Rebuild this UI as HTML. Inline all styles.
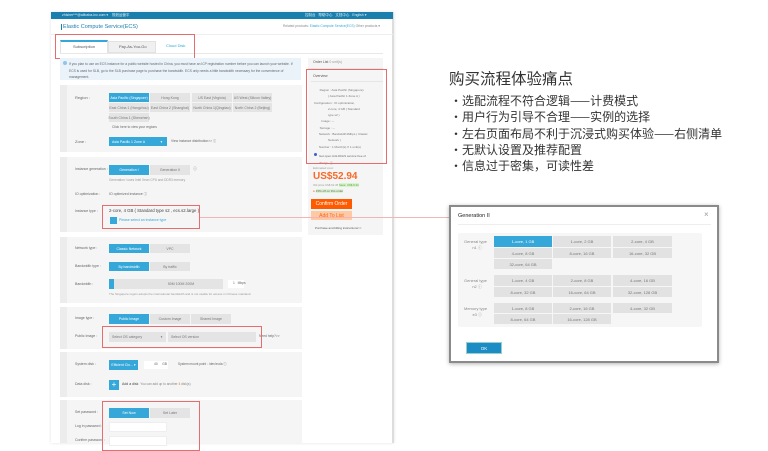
<!DOCTYPE html>
<html><head><meta charset="utf-8"><style>
*{margin:0;padding:0;box-sizing:border-box}
body{width:768px;height:443px;background:#fff;position:relative;overflow:hidden;font-family:"Liberation Sans","Noto Sans CJK SC",sans-serif}
.a{position:absolute}
.t{position:absolute;font-size:4px;color:#666;white-space:nowrap;line-height:1}
.b{position:absolute;background:#e4e4e4;font-size:3.5px;color:#777;text-align:center;display:flex;align-items:center;justify-content:center;white-space:nowrap}
.on{background:#35a7d9;color:#fff}
.sec{position:absolute;left:60px;width:242px;background:#f5f5f5}
.sec:before{content:"";position:absolute;left:0;top:0;bottom:0;width:7px;background:#ececec}
.red{position:absolute;border:1px solid #e56d6d}
.c{position:absolute;background:#e2e2e2;font-size:4px;color:#777;display:flex;align-items:center;justify-content:center;white-space:nowrap}
.li{position:relative;padding-left:12px}
.li:before{content:"•";position:absolute;left:0}
</style></head><body>
<div class="a" style="left:51px;top:12px;width:343px;height:431px;background:#fff;border-right:2px solid #ddd;box-shadow:0 0 3px rgba(0,0,0,.12)"></div>
<div class="a" style="left:51px;top:12px;width:342px;height:7px;background:#1b7fae"></div>
<div class="t" style="left:62px;top:13.5px;color:#dfeff7;font-size:3.5px">zhisher***@alibaba-inc.com ▾ &nbsp;&nbsp; 规划运营平</div>
<div class="t" style="left:305px;top:13.5px;color:#dfeff7;font-size:3.5px">控制台 &nbsp; 帮助中心 &nbsp; 文档中心 &nbsp; English ▾</div>
<div class="a" style="left:61px;top:24px;width:1px;height:6px;background:#1b7fae"></div>
<div class="t" style="left:63px;top:24.5px;font-size:5.5px;color:#1b7fae">Elastic Compute Service(ECS)</div>
<div class="t" style="left:283px;top:25px;font-size:3.3px;color:#888">Related products: <span style="color:#35a7d9">Elastic Compute Service(ECS)</span> Other products ▾</div>
<div class="a" style="left:51px;top:34px;width:342px;height:1px;background:#eee"></div>
<div class="a" style="left:60px;top:40px;width:48px;height:14px;background:#fff;border:1px solid #e2e2e2;border-top:2px solid #35a7d9;border-bottom:none"></div>
<div class="t" style="left:73px;top:45px;color:#555">Subscription</div>
<div class="a" style="left:108px;top:41px;width:48px;height:12px;background:#f0f0f0;border:1px solid #e2e2e2"></div>
<div class="t" style="left:119px;top:45px;color:#555">Pay-As-You-Go</div>
<div class="t" style="left:166px;top:44px;color:#35a7d9">Cloud Disk</div>
<div class="a" style="left:60px;top:53px;width:323px;height:1px;background:#e8e8e8"></div>
<div class="red" style="left:55px;top:34px;width:140px;height:25px"></div>
<div class="a" style="left:60px;top:58px;width:241px;height:22px;background:#eaf3fa"></div>
<div class="a" style="left:63px;top:61px;width:4px;height:4px;border-radius:50%;background:#8fc6e6"></div>
<div class="t" style="left:69px;top:61px;font-size:3.3px;line-height:6.5px;color:#666;white-space:normal;width:230px">If you plan to use an ECS instance for a public website hosted in China, you must have an ICP registration number before you can launch your website. If ECS is used for SLB, go to the SLB purchase page to purchase the bandwidth. ECS only needs a little bandwidth necessary for the convenience of management.</div>
<div class="sec" style="top:85px;height:67px"></div>
<div class="t" style="left:75px;top:96px">Region :</div>
<div class="b on" style="left:109px;top:93px;width:40px;height:9px">Asia Pacific (Singapore)</div>
<div class="b" style="left:150px;top:93px;width:40px;height:9px">Hong Kong</div>
<div class="b" style="left:192px;top:93px;width:40px;height:9px">US East (Virginia)</div>
<div class="b" style="left:233px;top:93px;width:39px;height:9px">US West (Silicon Valley)</div>
<div class="b" style="left:109px;top:103px;width:40px;height:9px">East China 1 (Hangzhou)</div>
<div class="b" style="left:150px;top:103px;width:40px;height:9px">East China 2 (Shanghai)</div>
<div class="b" style="left:192px;top:103px;width:40px;height:9px">North China 1(Qingdao)</div>
<div class="b" style="left:233px;top:103px;width:39px;height:9px">North China 2 (Beijing)</div>
<div class="b" style="left:109px;top:113px;width:40px;height:9px">South China 1 (Shenzhen)</div>
<div class="t" style="left:112px;top:126px;font-size:3.3px">Click here to view your regions</div>
<div class="t" style="left:75px;top:140px">Zone :</div>
<div class="b on" style="left:109px;top:137px;width:58px;height:9px;justify-content:flex-start;padding-left:3px">Asia Pacific 1 Zone A &nbsp;&nbsp;&nbsp;&nbsp;&nbsp;&nbsp;&nbsp;&nbsp;&nbsp;&nbsp;&nbsp;&nbsp;&nbsp;&nbsp; ▾</div>
<div class="t" style="left:171px;top:140px;font-size:3.3px">View instance distribution&gt;&gt; ⓘ</div>
<div class="sec" style="top:157px;height:75px"></div>
<div class="t" style="left:75px;top:168px;font-size:3.5px">Instance generation :</div>
<div class="b on" style="left:109px;top:165px;width:40px;height:10px">Generation I</div>
<div class="b" style="left:150px;top:165px;width:40px;height:10px">Generation II</div>
<div class="t" style="left:193px;top:167px">ⓘ</div>
<div class="t" style="left:109px;top:179px;font-size:3.2px;color:#999">Generation I uses Intel Xeon CPU and DDR3 memory</div>
<div class="t" style="left:75px;top:193px;font-size:3.5px">IO optimization :</div>
<div class="t" style="left:109px;top:193px;font-size:3.5px">IO optimized instance ⓘ</div>
<div class="t" style="left:75px;top:210px;font-size:3.5px">Instance type :</div>
<div class="t" style="left:109px;top:209px;font-size:4.3px;color:#444">2-core, 4 GB ( Standard type s2 , ecs.s2.large )</div>
<div class="a" style="left:110px;top:217px;width:7px;height:7px;background:#35a7d9"></div>
<div class="t" style="left:119px;top:219px;font-size:3.5px;color:#35a7d9">Please select an instance type</div>
<div class="red" style="left:102px;top:205px;width:98px;height:24px"></div>
<div class="sec" style="top:237px;height:66px"></div>
<div class="t" style="left:75px;top:247px;font-size:3.5px">Network type :</div>
<div class="b on" style="left:109px;top:244px;width:40px;height:9px">Classic Network</div>
<div class="b" style="left:150px;top:244px;width:40px;height:9px">VPC</div>
<div class="t" style="left:75px;top:265px;font-size:3.5px">Bandwidth type :</div>
<div class="b on" style="left:109px;top:262px;width:40px;height:9px">By bandwidth</div>
<div class="b" style="left:150px;top:262px;width:40px;height:9px">By traffic</div>
<div class="t" style="left:75px;top:283px;font-size:3.5px">Bandwidth :</div>
<div class="b" style="left:109px;top:279px;width:114px;height:10px;justify-content:space-around;padding-left:30px">50M 100M 200M</div>
<div class="a" style="left:109px;top:279px;width:5px;height:10px;background:#35a7d9"></div>
<div class="a" style="left:228px;top:280px;width:16px;height:8px;background:#fff"></div>
<div class="t" style="left:233px;top:282px;font-size:3.3px">1 &nbsp; Mbps</div>
<div class="t" style="left:109px;top:293px;font-size:3px;color:#999">The Singapore region adopts the international bandwidth and is not usable for access in Chinese mainland.</div>
<div class="sec" style="top:307px;height:42px"></div>
<div class="t" style="left:75px;top:317px;font-size:3.5px">Image type :</div>
<div class="b on" style="left:109px;top:314px;width:40px;height:10px">Public Image</div>
<div class="b" style="left:150px;top:314px;width:40px;height:10px">Custom Image</div>
<div class="b" style="left:191px;top:314px;width:40px;height:10px">Shared Image</div>
<div class="t" style="left:75px;top:335px;font-size:3.5px">Public Image :</div>
<div class="b" style="left:109px;top:332px;width:57px;height:10px;justify-content:flex-start;padding-left:3px">Select OS category &nbsp;&nbsp;&nbsp;&nbsp;&nbsp;&nbsp;&nbsp;&nbsp;&nbsp;&nbsp;&nbsp;&nbsp;&nbsp;&nbsp;&nbsp;&nbsp;&nbsp;&nbsp;▾</div>
<div class="b" style="left:168px;top:332px;width:88px;height:10px;justify-content:flex-start;padding-left:3px">Select OS version</div>
<div class="t" style="left:259px;top:335px;font-size:3.3px">Need help?&gt;&gt;</div>
<div class="red" style="left:102px;top:326px;width:160px;height:22px"></div>
<div class="sec" style="top:352px;height:45px"></div>
<div class="t" style="left:75px;top:363px;font-size:3.5px">System disk :</div>
<div class="b on" style="left:109px;top:360px;width:29px;height:10px">Efficient Clo... ▾</div>
<div class="a" style="left:144px;top:361px;width:24px;height:8px;background:#fff"></div>
<div class="t" style="left:154px;top:363px;font-size:3.3px">40 &nbsp;&nbsp;&nbsp; GB</div>
<div class="t" style="left:178px;top:363px;font-size:3.2px">System mount point : /dev/xvda ⓘ</div>
<div class="t" style="left:75px;top:383px;font-size:3.5px">Data disk :</div>
<div class="a" style="left:109px;top:380px;width:10px;height:10px;background:#35a7d9;color:#fff;font-size:8px;line-height:10px;text-align:center">+</div>
<div class="t" style="left:122px;top:383px;font-size:3.5px;color:#444">Add a disk &nbsp;<span style="color:#888;font-size:3.2px">You can add up to another <span style="color:#f60">4</span> disk(s)</span></div>
<div class="sec" style="top:400px;height:43px"></div>
<div class="t" style="left:75px;top:411px;font-size:3.5px">Set password :</div>
<div class="b on" style="left:109px;top:408px;width:40px;height:10px">Set Now</div>
<div class="b" style="left:150px;top:408px;width:40px;height:10px">Set Later</div>
<div class="t" style="left:75px;top:425px;font-size:3.5px">Log in password :</div>
<div class="a" style="left:109px;top:422px;width:58px;height:10px;background:#fff;border:1px solid #eee"></div>
<div class="t" style="left:75px;top:439px;font-size:3.5px">Confirm password :</div>
<div class="a" style="left:109px;top:436px;width:58px;height:10px;background:#fff;border:1px solid #eee"></div>
<div class="red" style="left:102px;top:401px;width:98px;height:50px"></div>
<div class="a" style="left:308px;top:58px;width:75px;height:177px;background:#f5f5f5"></div>
<div class="t" style="left:313px;top:61px;font-size:3.5px;color:#555">Order List <span style="color:#999">0 unit(s)</span></div>
<div class="a" style="left:308px;top:68px;width:75px;height:1px;background:#e6e6e6"></div>
<div class="t" style="left:313px;top:75px;font-size:3.5px;color:#555">Overview</div>
<div class="a" style="left:311px;top:81px;width:72px;height:1px;background:#e6e6e6"></div>
<div class="t" style="left:313px;top:87px;font-size:3px;line-height:6.3px;color:#777;white-space:pre">        Region : Asia Pacific (Singapore)
                  ( Asia Pacific 1 Zone A )
 Configuration : IO optimization,
                  2-core, 4 GB ( Standard
                  type s2 )
          Image : --
        Storage : --
       Network : Bandwidth1Mbps ( Classic
                  Network )
       Number : 1 Month(s) X 1 unit(s)</div>
<div class="a" style="left:314px;top:153px;width:3px;height:3px;border-radius:50%;background:#3a5fcf"></div>
<div class="t" style="left:319px;top:153px;font-size:3px;line-height:6.5px;color:#666">Get open Anti-DDoS service free of<br>charge. ⓘ</div>
<div class="red" style="left:306px;top:69px;width:81px;height:95px"></div>
<div class="t" style="left:313px;top:167px;font-size:3px;color:#999">Estimated cost:</div>
<div class="t" style="left:313px;top:172px;font-size:10px;font-weight:bold;color:#f56a2a">US$52.94</div>
<div class="t" style="left:313px;top:184px;font-size:2.8px;color:#999">Old price:US$ 62.35 <span style="background:#d9f2cf;color:#5a3">Save: US$ 9.34</span></div>
<div class="t" style="left:313px;top:190px;font-size:3px;color:#666"><span style="color:#f60">●</span> <span style="background:#d9f2cf">15% off on this order</span></div>
<div class="a" style="left:311px;top:199px;width:41px;height:10px;background:#ff5a00;color:#fff;font-size:5px;display:flex;align-items:center;justify-content:center">Confirm Order</div>
<div class="a" style="left:311px;top:211px;width:41px;height:9px;background:#ffc9a6;color:#f60;font-size:5px;display:flex;align-items:center;justify-content:center">Add To List</div>
<div class="t" style="left:315px;top:227px;font-size:3px;color:#555">Purchase and billing instructions&gt;&gt;</div>
<div class="a" style="left:200px;top:217px;width:250px;height:1px;background:#f2b5b5"></div>
<div class="a" style="left:449px;top:205px;width:270px;height:158px;background:#fff;border:2px solid #8a8a8a;box-shadow:0 1px 4px rgba(0,0,0,.3)"></div>
<div class="t" style="left:458px;top:214px;font-size:5.5px;color:#222">Generation II</div>
<div class="t" style="left:704px;top:211px;font-size:8px;color:#999">×</div>
<div class="a" style="left:458px;top:224px;width:253px;height:1px;background:#eee"></div>
<div class="a" style="left:458px;top:233px;width:244px;height:94px;background:#f6f6f6;border-radius:2px"></div>
<div class="t" style="left:464px;top:239px;font-size:4px;color:#888;text-align:center;line-height:6px">General type<br>&nbsp;&nbsp;&nbsp;n1 ⓘ</div>
<div class="t" style="left:464px;top:278px;font-size:4px;color:#888;text-align:center;line-height:6px">General type<br>&nbsp;&nbsp;&nbsp;n2 ⓘ</div>
<div class="t" style="left:464px;top:306px;font-size:4px;color:#888;text-align:center;line-height:6px">Memory type<br>&nbsp;&nbsp;&nbsp;e3 ⓘ</div>
<div class="c" style="left:494px;top:236px;width:58px;height:11px;background:#35a7d9;color:#fff">1-core, 1 GB</div>
<div class="c" style="left:553px;top:236px;width:58px;height:11px">1-core, 2 GB</div>
<div class="c" style="left:613px;top:236px;width:59px;height:11px">2-core, 4 GB</div>
<div class="c" style="left:494px;top:248px;width:58px;height:10px">4-core, 8 GB</div>
<div class="c" style="left:553px;top:248px;width:58px;height:10px">8-core, 16 GB</div>
<div class="c" style="left:613px;top:248px;width:59px;height:10px">16-core, 32 GB</div>
<div class="c" style="left:494px;top:259px;width:58px;height:10px">32-core, 64 GB</div>
<div class="c" style="left:494px;top:275px;width:58px;height:11px">1-core, 4 GB</div>
<div class="c" style="left:553px;top:275px;width:58px;height:11px">2-core, 8 GB</div>
<div class="c" style="left:613px;top:275px;width:59px;height:11px">4-core, 16 GB</div>
<div class="c" style="left:494px;top:287px;width:58px;height:10px">8-core, 32 GB</div>
<div class="c" style="left:553px;top:287px;width:58px;height:10px">16-core, 64 GB</div>
<div class="c" style="left:613px;top:287px;width:59px;height:10px">32-core, 128 GB</div>
<div class="c" style="left:494px;top:303px;width:58px;height:10px">1-core, 8 GB</div>
<div class="c" style="left:553px;top:303px;width:58px;height:10px">2-core, 16 GB</div>
<div class="c" style="left:613px;top:303px;width:59px;height:10px">4-core, 32 GB</div>
<div class="c" style="left:494px;top:314px;width:58px;height:10px">8-core, 64 GB</div>
<div class="c" style="left:553px;top:314px;width:58px;height:10px">16-core, 128 GB</div>
<div class="a" style="left:466px;top:342px;width:36px;height:12px;background:#1b8cc4;border:1px solid #9cc;color:#fff;font-size:4.5px;display:flex;align-items:center;justify-content:center">OK</div>
<div class="t" style="left:449px;top:71px;font-size:15.5px;color:#333;font-family:'Noto Sans CJK SC',sans-serif">购买流程体验痛点</div>
<div class="a" style="left:450px;top:93px;font-size:12px;line-height:16.3px;color:#333;font-family:'Noto Sans CJK SC',sans-serif;white-space:nowrap">
<div class="li">选配流程不符合逻辑——计费模式</div>
<div class="li">用户行为引导不合理——实例的选择</div>
<div class="li">左右页面布局不利于沉浸式购买体验——右侧清单</div>
<div class="li">无默认设置及推荐配置</div>
<div class="li">信息过于密集，可读性差</div>
</div>
</body></html>
